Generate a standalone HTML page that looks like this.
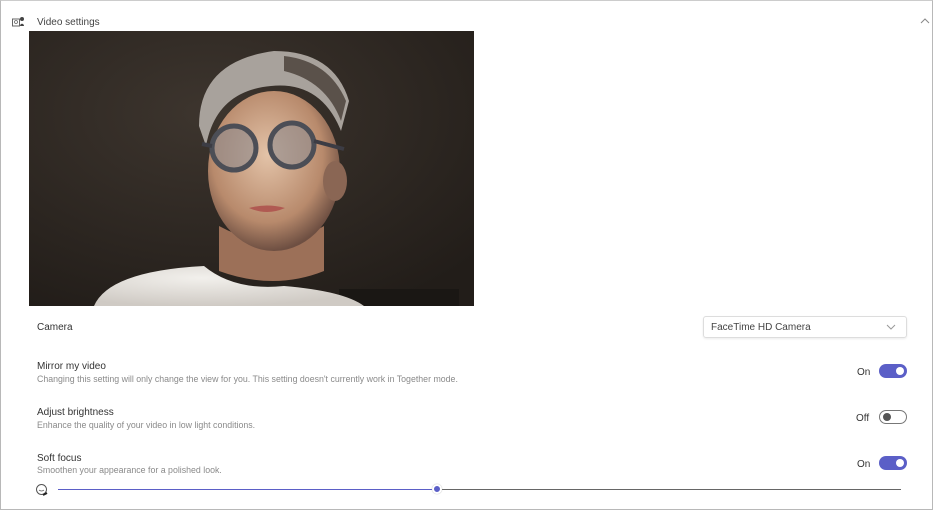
<!DOCTYPE html>
<html><head><meta charset="utf-8"><style>
*{margin:0;padding:0;box-sizing:border-box}
body{width:936px;height:513px;background:#fff;font-family:"Liberation Sans",sans-serif;position:relative;overflow:hidden;color:#333}
.frame{position:absolute;left:0;top:0;width:933px;height:510px;border:1px solid #b8b8b8;border-top-color:#ccc}
.t{position:absolute;white-space:nowrap}
.lbl{font-size:10px;color:#333}
.sub{font-size:8.8px;color:#8a8a8a}
.tg{position:absolute;width:28px;height:14px;border-radius:7px}
.tg.on{background:#5b5fc7}
.tg.on::after{content:"";position:absolute;right:3px;top:3px;width:8px;height:8px;border-radius:50%;background:#fff}
.tg.off{border:1px solid #777;background:#fff}
.tg.off::after{content:"";position:absolute;left:3px;top:2px;width:8px;height:8px;border-radius:50%;background:#555}
</style></head><body>
<div class="frame"></div>
<svg class="t" style="left:12px;top:16px" width="14" height="12" viewBox="0 0 14 12"><rect x="0.5" y="3" width="7" height="7" fill="none" stroke="#666"/><circle cx="4" cy="6" r="1.5" fill="none" stroke="#666" stroke-width=".8"/><circle cx="10" cy="3" r="2" fill="#444"/><path d="M8 10c0-3 4-3 4 0z" fill="#444"/></svg>
<div class="t lbl" style="left:37px;top:17px;font-size:10px;color:#444">Video settings</div>
<svg class="t" style="left:920px;top:18px" width="10" height="6"><path d="M1 5L5 1L9 5" fill="none" stroke="#888"/></svg>
<svg class="t" style="left:29px;top:31px" width="445" height="275" viewBox="0 0 445 275">
<defs>
<radialGradient id="bg" cx="0.4" cy="0.3" r="0.8"><stop offset="0" stop-color="#3d352e"/><stop offset="1" stop-color="#221d19"/></radialGradient>
<radialGradient id="face" cx="0.45" cy="0.4" r="0.6"><stop offset="0" stop-color="#e3c3a8"/><stop offset="0.7" stop-color="#b88a6c"/><stop offset="1" stop-color="#6e4f42"/></radialGradient>
<radialGradient id="shirt" cx="0.4" cy="0.3" r="0.7"><stop offset="0" stop-color="#f2f0ec"/><stop offset="1" stop-color="#cfcac4"/></radialGradient>
</defs>
<rect width="445" height="275" fill="url(#bg)"/>
<path d="M310 258h120v17h-120z" fill="#1a1714"/>
<path d="M190 195q55 30 105 0v45q-50 20-105 0z" fill="#9c7058"/>
<ellipse cx="245" cy="140" rx="66" ry="80" fill="url(#face)"/>
<ellipse cx="306" cy="150" rx="12" ry="20" fill="#8a6654"/>
<path d="M170 95q0-65 75-75q60 0 75 50l-8 30q-20-50-70-45q-55 5-65 60z" fill="#a8a29c"/>
<path d="M255 25q45 5 62 45l-5 20q-15-40-57-50z" fill="#5a514a"/>
<circle cx="205" cy="117" r="22" fill="#8e8a8e" fill-opacity=".6" stroke="#4c4e56" stroke-width="5"/>
<circle cx="263" cy="114" r="22" fill="#8e8a8e" fill-opacity=".6" stroke="#4c4e56" stroke-width="5"/>
<path d="M173 113l10 2M285 110l30 8" stroke="#3c3c44" stroke-width="4"/>
<path d="M220 177q18-5 36 0q-18 8-36 0z" fill="#b05a52"/>
<path d="M65 275q15-35 110-40q30 25 80 20q60 5 80 20z" fill="url(#shirt)"/>
</svg>
<div class="t lbl" style="left:37px;top:322px">Camera</div>
<div class="t" style="left:703px;top:316px;width:204px;height:22px;border:1px solid #ddd;border-radius:3px;box-shadow:0 1px 2px rgba(0,0,0,.08)"></div>
<div class="t lbl" style="left:711px;top:322px;color:#444">FaceTime HD Camera</div>
<svg class="t" style="left:886px;top:324px" width="10" height="6"><path d="M1 1L5 5L9 1" fill="none" stroke="#999"/></svg>
<div class="t lbl" style="left:37px;top:361px">Mirror my video</div>
<div class="t sub" style="left:37px;top:374px">Changing this setting will only change the view for you. This setting doesn't currently work in Together mode.</div>
<div class="t lbl" style="left:857px;top:367px">On</div>
<div class="tg on" style="left:879px;top:364px"></div>
<div class="t lbl" style="left:37px;top:407px">Adjust brightness</div>
<div class="t sub" style="left:37px;top:420px">Enhance the quality of your video in low light conditions.</div>
<div class="t lbl" style="left:856px;top:413px">Off</div>
<div class="tg off" style="left:879px;top:410px"></div>
<div class="t lbl" style="left:37px;top:453px">Soft focus</div>
<div class="t sub" style="left:37px;top:465px">Smoothen your appearance for a polished look.</div>
<div class="t lbl" style="left:857px;top:459px">On</div>
<div class="tg on" style="left:879px;top:456px"></div>
<svg class="t" style="left:35px;top:483px" width="14" height="13"><circle cx="6.5" cy="6.5" r="5" fill="#fff" stroke="#555"/><path d="M4 7q2.5 2 5 0" fill="none" stroke="#555" stroke-width=".8"/><path d="M8 12l4-2" stroke="#222" stroke-width="2"/></svg>
<div class="t" style="left:58px;top:489px;width:379px;height:1px;background:#5b5fc7"></div>
<div class="t" style="left:437px;top:489px;width:464px;height:1px;background:#666"></div>
<div class="t" style="left:432px;top:484px;width:10px;height:10px;border-radius:50%;background:#5b5fc7;border:2px solid #fff;box-shadow:0 0 1px #999"></div>
</body></html>
